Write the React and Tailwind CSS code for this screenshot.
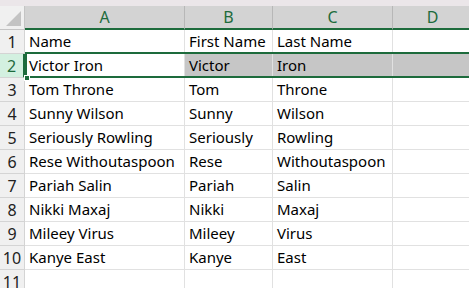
import React from 'react';

const cols = [
  { key: 'A', w: 'w-[160px]' },
  { key: 'B', w: 'w-[88px]' },
  { key: 'C', w: 'w-[120px]' },
  { key: 'D', w: 'w-[80px]' },
];

const rows = [
  ['Name', 'First Name', 'Last Name'],
  ['Victor Iron', 'Victor', 'Iron'],
  ['Tom Throne', 'Tom', 'Throne'],
  ['Sunny Wilson', 'Sunny', 'Wilson'],
  ['Seriously Rowling', 'Seriously', 'Rowling'],
  ['Rese Withoutaspoon', 'Rese', 'Withoutaspoon'],
  ['Pariah Salin', 'Pariah', 'Salin'],
  ['Nikki Maxaj', 'Nikki', 'Maxaj'],
  ['Mileey Virus', 'Mileey', 'Virus'],
  ['Kanye East', 'Kanye', 'East'],
  ['', '', ''],
];

const App = () => {
  return (
    <div className="w-[469px] h-[288px] overflow-hidden bg-white font-['Noto_Sans',sans-serif] text-[15px] text-black">
      <div className="h-[6px] bg-[#ebe6e9]" />

      {/* column headers */}
      <div className="flex h-[24px]">
        <div className="w-[25px] shrink-0 bg-[#f0f0f0] border-r border-b border-[#c4c4c4] flex items-end justify-end p-[3px]">
          <svg width="15" height="15" viewBox="0 0 15 15">
            <polygon points="15,0 15,15 0,15" fill="#c3c3c3" />
          </svg>
        </div>
        {cols.map((c) => (
          <div
            key={c.key}
            className={`${c.w} shrink-0 bg-[#d3d3d3] border-r border-[#b7b7b7] border-b-2 border-b-[#1d6b3c] flex items-center justify-center text-[#1d6b3c] text-[16px] leading-none`}
          >
            {c.key}
          </div>
        ))}
      </div>

      <div className="relative">
        {rows.map((r, i) => {
          const sel = i === 1;
          return (
            <div key={i} className="flex h-[24px]">
              <div
                className={
                  sel
                    ? 'w-[25px] shrink-0 bg-[#d3f0e0] border-r-2 border-r-[#1d6b3c] border-b border-[#d4d4d4] flex items-center justify-center text-[#1d6b3c] text-[16px]'
                    : 'w-[25px] shrink-0 bg-[#f0f0f0] border-r border-b border-[#d4d4d4] flex items-center justify-center text-[#222] text-[16px]'
                }
              >
                {i + 1}
              </div>
              {cols.map((c, j) => (
                <div
                  key={c.key}
                  className={`${c.w} shrink-0 border-r border-b border-[#e1e1e1] flex items-center px-[4px] whitespace-nowrap overflow-hidden ${
                    sel && j > 0 ? 'bg-[#c6c6c6]' : ''
                  }`}
                >
                  {r[j] || ''}
                </div>
              ))}
            </div>
          );
        })}

        {/* selection outline on row 2 */}
        <div className="absolute left-[25px] top-[22px] w-[460px] h-[26px] border-2 border-[#1d6b3c] pointer-events-none" />
        <div className="absolute left-[24px] top-[45px] w-[6px] h-[6px] bg-[#1d6b3c] border border-white" />
      </div>
    </div>
  );
};

export default App;
